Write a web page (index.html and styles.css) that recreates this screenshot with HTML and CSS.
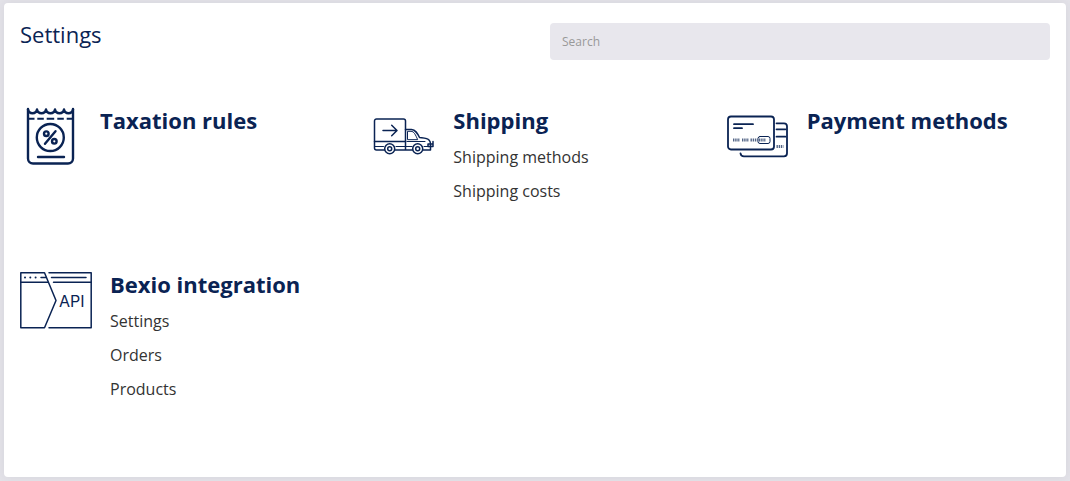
FILE: index.html
```html
<!DOCTYPE html>
<html lang="en">
<head>
    <meta charset="UTF-8">
    <meta name="viewport" content="width=device-width, initial-scale=1.0">
    <title>Settings</title>
    <link rel="stylesheet" href="styles.css">
</head>
<body>

<main class="settings-card">
    <header class="settings-header">
        <h1>Settings</h1>
        <input type="search" class="search-input" placeholder="Search" aria-label="Search">
    </header>

    <div class="settings-grid">
        <section class="settings-item">
            <svg class="icon" viewBox="0 0 60 60" aria-hidden="true">
                <g class="thick">
                    <path d="M8 3v49.500a5 5 0 0 0 5 5h35a5 5 0 0 0 5-5V3"/>
                    <path d="M8 3.500c1 5 8 5 9 0c1 5 8 5 9 0c1 5 8 5 9 0c1 5 8 5 9 0c1 5 8 5 9 0"/>
                    <path class="perforation" d="M9 12.700h5.500M17.300 12.700h6.500M26.700 12.700h7.500M37.300 12.700h6.500M46.700 12.700h5.500"/>
                    <circle cx="30.300" cy="31.500" r="13.500"/>
                    <path d="M35.500 25.200L25 37.800"/>
                    <circle cx="26.300" cy="27.700" r="2.300"/>
                    <circle cx="34.300" cy="35.300" r="2.300"/>
                    <path d="M18 51h26"/>
                </g>
            </svg>
            <div class="item-body">
                <h2><a href="#taxation">Taxation rules</a></h2>
            </div>
        </section>

        <section class="settings-item">
            <svg class="icon" viewBox="0 0 60 60" aria-hidden="true">
                <path d="M11.500 44H3.500a2 2 0 0 1-2-2V15a2 2 0 0 1 2-2h27a2 2 0 0 1 2 2v29M22 44h17.500"/>
                <path d="M1.500 35.500h31"/>
                <path d="M10 24.500h13.500M18.700 19.300l5.300 5.200l-5.300 5.200"/>
                <path d="M32.500 23.500h6c4 0 6 4 8 8c4 .5 8 .5 9.500 2.500c1 1 1.500 2 1.500 4v6h-7.500"/>
                <path class="thin" d="M34.500 33.300v-8h3.500c3 0 4.500 3.500 6.500 8zM34 35.500h18"/>
                <path d="M60 35.500v5h-5v-2.500h5"/>
                <path class="thin" d="M2 40.500h8.500M23 40.500h16M51 40.500h6"/>
                <circle cx="16.700" cy="42.700" r="5"/>
                <circle cx="16.700" cy="42.700" r="2"/>
                <circle cx="44.700" cy="42.700" r="5"/>
                <circle cx="44.700" cy="42.700" r="2"/>
            </svg>
            <div class="item-body">
                <h2><a href="#shipping">Shipping</a></h2>
                <ul>
                    <li><a href="#shipping-methods">Shipping methods</a></li>
                    <li><a href="#shipping-costs">Shipping costs</a></li>
                </ul>
            </div>
        </section>

        <section class="settings-item">
            <svg class="icon" viewBox="0 0 60 60" aria-hidden="true">
                <rect class="medium" x="1" y="10.500" width="46" height="33" rx="3"/>
                <path class="medium" d="M49.500 17.300h7.500a3 3 0 0 1 3 3v27a3 3 0 0 1-3 3H17a3.500 3.500 0 0 1-3.500-3"/>
                <path class="medium" d="M49.500 23.300h9M49.500 30.700h9M7 18.200h19M7 22.200h8"/>
                <path class="digits" d="M6 34h7M15 34h7M23.500 34h7M32 34h7M49.500 40.500h7"/>
                <rect class="thin" x="31" y="30.500" width="12" height="7" rx="2"/>
            </svg>
            <div class="item-body">
                <h2><a href="#payment">Payment methods</a></h2>
            </div>
        </section>

        <section class="settings-item">
            <svg class="icon icon-wide" viewBox="0 -2 72 60" aria-hidden="true">
                <path d="M24.500 .8H.8v55h23.700L36 28.500z"/>
                <path d="M29 .8h42.200v55H29"/>
                <path d="M.8 10.200h27M33.500 10.200h37.500M21 5.500h5M31.500 5.500h34.500"/>
                <path class="dots" d="M5 5.500h.01M10.300 5.500h.01M15.600 5.500h.01"/>
                <text x="39" y="35">API</text>
            </svg>
            <div class="item-body">
                <h2><a href="#bexio">Bexio integration</a></h2>
                <ul>
                    <li><a href="#bexio-settings">Settings</a></li>
                    <li><a href="#bexio-orders">Orders</a></li>
                    <li><a href="#bexio-products">Products</a></li>
                </ul>
            </div>
        </section>
    </div>
</main>

</body>
</html>
```
FILE: styles.css
```css
* {
    box-sizing: border-box;
}

body {
    margin: 0;
    padding: 3px 4px 4px;
    min-height: 100vh;
    display: flex;
    background-color: #e4e3e9;
    font-family: "Open Sans", sans-serif;
    color: #333;
}

a {
    color: inherit;
    text-decoration: none;
}

a:hover {
    text-decoration: underline;
}

.settings-card {
    flex: 1;
    padding: 20px 16px;
    background-color: #fff;
    border-radius: 4px;
    box-shadow: 0 0 12px rgba(50, 45, 70, 0.08);
}

.settings-header {
    display: flex;
    justify-content: space-between;
    align-items: flex-start;
    margin-bottom: 44px;
}

h1 {
    margin: 0;
    font-size: 22px;
    font-weight: 400;
    line-height: 22px;
    color: #0a2353;
}

.search-input {
    width: 500px;
    max-width: 60%;
    height: 37px;
    padding: 0 12px;
    border: none;
    border-radius: 4px;
    background-color: #e8e7ed;
    font-family: inherit;
    font-size: 12px;
    color: #333;
}

.search-input::placeholder {
    color: #999;
}

.settings-grid {
    display: grid;
    grid-template-columns: repeat(3, 1fr);
    gap: 60px 30px;
}

.settings-item {
    display: flex;
    align-items: flex-start;
    gap: 20px;
}

.icon {
    flex: none;
    width: 60px;
    height: 60px;
    margin-top: 2px;
    overflow: visible;
    fill: none;
    stroke: #0a2353;
    stroke-width: 1.5;
    stroke-linecap: round;
    stroke-linejoin: round;
}

.icon-wide {
    width: 72px;
}

.icon-wide + .item-body {
    margin-left: -2px;
}

.icon .thick {
    stroke-width: 2.4;
}

.icon .medium {
    stroke-width: 1.8;
}

.icon .thin {
    stroke-width: 1;
}

.icon .dots {
    stroke-width: 2;
}

.icon .perforation {
    stroke-width: 2;
    stroke-linecap: butt;
}

/* embossed card numbers */
.icon .digits {
    stroke-width: 3;
    stroke-linecap: butt;
    stroke-dasharray: 1.4 0.8;
    stroke-opacity: 0.7;
}

.icon text {
    fill: #0a2353;
    stroke: none;
    font-family: Inter, sans-serif;
    font-size: 16px;
}

h2 {
    margin: 0 0 4px;
    font-size: 22px;
    font-weight: 700;
    line-height: 32px;
    color: #0a2353;
}

ul {
    margin: 0;
    padding: 0;
    list-style: none;
}

li {
    font-size: 16px;
    line-height: 34px;
}

@media (max-width: 800px) {
    .settings-grid {
        grid-template-columns: 1fr;
        gap: 30px;
    }
}
```
